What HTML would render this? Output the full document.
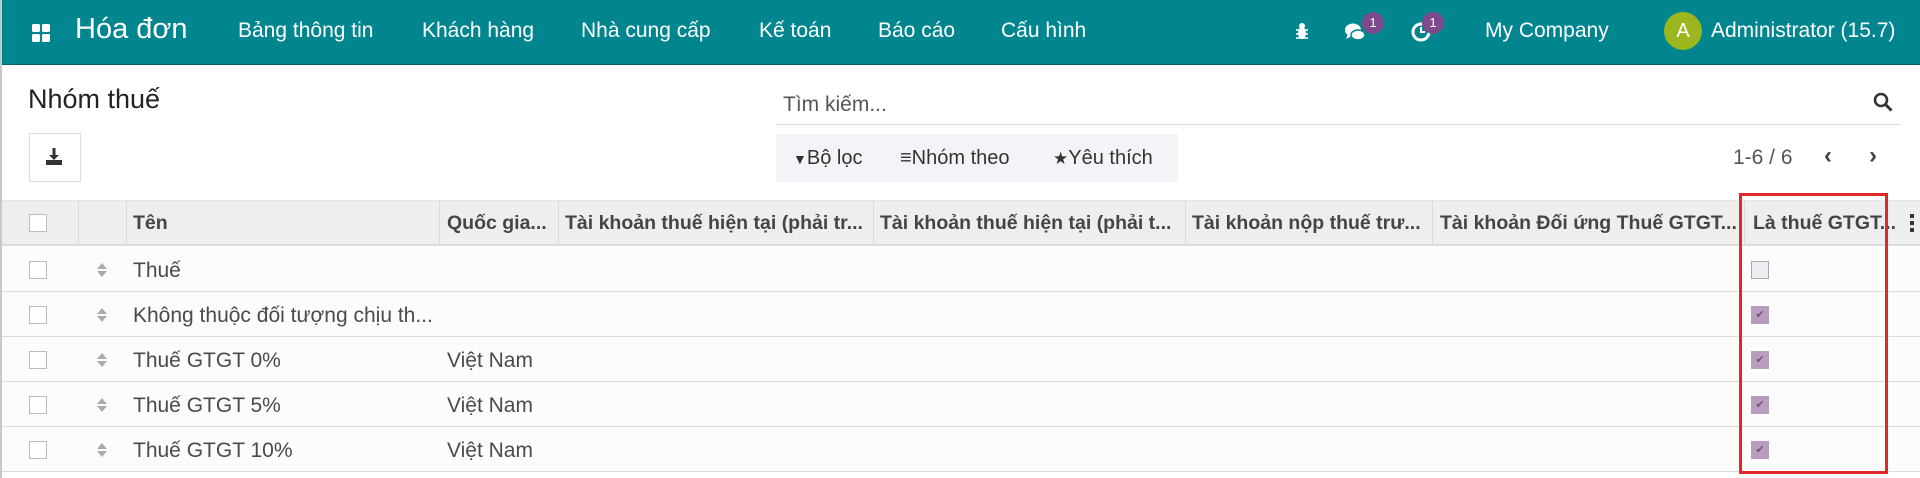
<!DOCTYPE html>
<html><head><meta charset="utf-8"><style>
*{box-sizing:border-box;margin:0;padding:0}
body{width:1920px;height:478px;overflow:hidden;background:#fff;font-family:"Liberation Sans",sans-serif;color:#4c4c4c;position:relative;border-left:2px solid #c8c8c8}
.a{position:absolute;white-space:nowrap}
.nav{position:absolute;left:0;top:0;width:1920px;height:65px;background:#01868f;border-bottom:1px solid #0b5f66;color:#fff}
.nav .a{font-size:21px;top:19px}
.hd{position:absolute;left:0;top:200px;width:1920px;height:46px;background:#eeeeee;border-bottom:2px solid #dcdcdc;border-top:1px solid #e4e4e4}
.hd .a{font-size:19.5px;font-weight:bold;color:#454545;top:11px}
.vl{position:absolute;top:0;width:1px;height:44px;background:#dadada}
.row{position:absolute;left:0;width:1920px;height:45px;border-bottom:1px solid #dcdcdc;background:#fcfcfc}
.row .a{font-size:21px;top:12px;color:#4a4a4a}
.cb{position:absolute;width:18px;height:18px;border:1px solid #bcbcbc;background:#fff}
.ck{position:absolute;left:1749px;top:14px;width:18px;height:18px;background:#b89dbf;color:#6f5676;font-size:11px;text-align:center;line-height:18px}
.sort{position:absolute;left:95px;top:15px;width:10px;height:16px}
</style></head><body>
<div class="nav">
 <svg class="a" style="left:30px;top:24px" width="18" height="18"><rect x="0" y="0" width="8" height="8" rx="1.5" fill="#fff"/><rect x="10" y="0" width="8" height="8" rx="1.5" fill="#fff"/><rect x="0" y="10" width="8" height="8" rx="1.5" fill="#fff"/><rect x="10" y="10" width="8" height="8" rx="1.5" fill="#fff"/></svg>
 <div class="a" style="left:73px;top:13px;font-size:29px">Hóa đơn</div>
 <div class="a" style="left:236px">Bảng thông tin</div>
 <div class="a" style="left:420px">Khách hàng</div>
 <div class="a" style="left:579px">Nhà cung cấp</div>
 <div class="a" style="left:757px">Kế toán</div>
 <div class="a" style="left:876px">Báo cáo</div>
 <div class="a" style="left:999px">Cấu hình</div>
 <svg class="a" style="left:1293px;top:22px" width="14" height="18"><ellipse cx="7" cy="11" rx="4" ry="6" fill="#fff"/><circle cx="7" cy="4" r="3" fill="#fff"/><path d="M1 8h12M1 12h12M1 16h12" stroke="#fff" stroke-width="1.5"/></svg>
 <svg class="a" style="left:1342px;top:21px" width="24" height="22"><ellipse cx="9" cy="9" rx="8" ry="6.5" fill="#fff"/><path d="M4 13l-2 5 6-3z" fill="#fff"/><ellipse cx="14" cy="14" rx="7" ry="5" fill="#fff" stroke="#01868f" stroke-width="1.5"/></svg>
 <div class="a" style="left:1360px;top:12px;width:22px;height:22px;border-radius:11px;background:#7c4a8a;font-size:13px;text-align:center;line-height:22px">1</div>
 <svg class="a" style="left:1408px;top:21px" width="22" height="22"><circle cx="11" cy="11" r="8" fill="none" stroke="#fff" stroke-width="3"/><path d="M11 6v5h4" stroke="#fff" stroke-width="2" fill="none"/></svg>
 <div class="a" style="left:1420px;top:12px;width:22px;height:22px;border-radius:11px;background:#7c4a8a;font-size:13px;text-align:center;line-height:22px">1</div>
 <div class="a" style="left:1483px">My Company</div>
 <div class="a" style="left:1662px;top:12px;width:38px;height:38px;border-radius:19px;background:#9cb61d;font-size:20px;text-align:center;line-height:38px">A</div>
 <div class="a" style="left:1709px">Administrator (15.7)</div>
</div>
<div class="a" style="left:26px;top:84px;font-size:27px;color:#222">Nhóm thuế</div>
<div class="a" style="left:27px;top:133px;width:52px;height:49px;border:1px solid #ddd;background:#fff"></div>
<svg class="a" style="left:43px;top:147px" width="18" height="18"><path d="M9 1v9" stroke="#333" stroke-width="3"/><path d="M4 8l5 5 5-5z" fill="#333"/><rect x="1" y="13" width="16" height="5" fill="#333"/></svg>
<div class="a" style="left:781px;top:93px;font-size:21px;color:#555">Tìm kiếm...</div>
<div class="a" style="left:774px;top:124px;width:1124px;height:1px;background:#ddd"></div>
<svg class="a" style="left:1871px;top:92px" width="20" height="20"><circle cx="8" cy="8" r="6" fill="none" stroke="#333" stroke-width="2.6"/><path d="M12.5 12.5l6 6" stroke="#333" stroke-width="3"/></svg>
<div class="a" style="left:774px;top:134px;width:402px;height:48px;background:#f3f4f7"></div>
<div class="a" style="left:791px;top:147px;font-size:20px;color:#333"><span style="font-size:14px">▼</span>Bộ lọc</div>
<div class="a" style="left:898px;top:147px;font-size:20px;color:#333">≡Nhóm theo</div>
<div class="a" style="left:1051px;top:147px;font-size:20px;color:#333"><span style="font-size:17px">★</span>Yêu thích</div>
<div class="a" style="left:1731px;top:146px;font-size:21px;color:#555">1-6 / 6</div>
<div class="a" style="left:1822px;top:142px;font-size:24px;color:#444;font-weight:bold">‹</div>
<div class="a" style="left:1867px;top:142px;font-size:24px;color:#444;font-weight:bold">›</div>
<div class="hd">
 <div class="cb" style="left:27px;top:13px"></div>
 <div class="vl" style="left:76px"></div><div class="vl" style="left:124px"></div><div class="vl" style="left:437px"></div><div class="vl" style="left:556px"></div><div class="vl" style="left:871px"></div><div class="vl" style="left:1183px"></div><div class="vl" style="left:1430px"></div><div class="vl" style="left:1742px"></div>
 <div class="a" style="left:131px">Tên</div>
 <div class="a" style="left:445px">Quốc gia...</div>
 <div class="a" style="left:563px">Tài khoản thuế hiện tại (phải tr...</div>
 <div class="a" style="left:878px">Tài khoản thuế hiện tại (phải t...</div>
 <div class="a" style="left:1190px">Tài khoản nộp thuế trư...</div>
 <div class="a" style="left:1438px">Tài khoản Đối ứng Thuế GTGT...</div>
 <div class="a" style="left:1751px">Là thuế GTGT...</div>
 <div class="a" style="left:1908px;top:13px;width:4px;height:18px;background:repeating-linear-gradient(#333 0 4px,transparent 4px 7px)"></div>
</div>
<div class="row" style="top:247px"><div class="cb" style="left:27px;top:14px"></div><svg class="sort" viewBox="0 0 10 16"><path d="M0 7L5 1 10 7zM0 9L5 15 10 9z" fill="#aaa"/></svg><div class="a" style="left:131px">Thuế</div><div class="ck" style="background:#eceef3;border:1px solid #aaa"></div></div>
<div class="row" style="top:292px"><div class="cb" style="left:27px;top:14px"></div><svg class="sort" viewBox="0 0 10 16"><path d="M0 7L5 1 10 7zM0 9L5 15 10 9z" fill="#aaa"/></svg><div class="a" style="left:131px">Không thuộc đối tượng chịu th...</div><div class="ck">✔</div></div>
<div class="row" style="top:337px"><div class="cb" style="left:27px;top:14px"></div><svg class="sort" viewBox="0 0 10 16"><path d="M0 7L5 1 10 7zM0 9L5 15 10 9z" fill="#aaa"/></svg><div class="a" style="left:131px">Thuế GTGT 0%</div><div class="a" style="left:445px">Việt Nam</div><div class="ck">✔</div></div>
<div class="row" style="top:382px"><div class="cb" style="left:27px;top:14px"></div><svg class="sort" viewBox="0 0 10 16"><path d="M0 7L5 1 10 7zM0 9L5 15 10 9z" fill="#aaa"/></svg><div class="a" style="left:131px">Thuế GTGT 5%</div><div class="a" style="left:445px">Việt Nam</div><div class="ck">✔</div></div>
<div class="row" style="top:427px"><div class="cb" style="left:27px;top:14px"></div><svg class="sort" viewBox="0 0 10 16"><path d="M0 7L5 1 10 7zM0 9L5 15 10 9z" fill="#aaa"/></svg><div class="a" style="left:131px">Thuế GTGT 10%</div><div class="a" style="left:445px">Việt Nam</div><div class="ck">✔</div></div>
<div class="a" style="left:1737px;top:193px;width:149px;height:281px;border:3px solid #e0282b"></div>
</body></html>
